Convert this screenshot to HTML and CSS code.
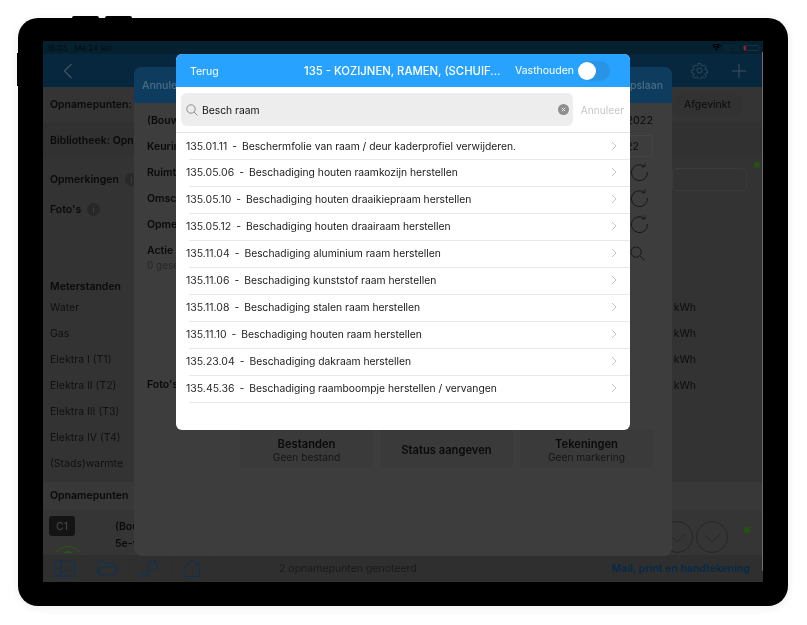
FILE: index.html
```html
<!DOCTYPE html>
<html lang="nl">
<head>
<meta charset="utf-8">
<title>Opnamepunten</title>
<link rel="stylesheet" href="styles.css">
</head>
<body>
<div class="device">
  <span class="hw hw-top1"></span>
  <span class="hw hw-top2"></span>
  <span class="hw hw-left"></span>
  <div class="screen">
    <header class="topbar">
      <div class="status">
        <span>16:03&nbsp;&nbsp; Ma 24 jan.</span>
        <span class="status-right">
          <svg class="wifi" viewBox="0 0 14 10"><path d="M7 9.6 4.9 7.3a3 3 0 0 1 4.2 0zM3.6 6 2.3 4.6a6.8 6.8 0 0 1 9.4 0L10.4 6a5 5 0 0 0-6.8 0zM1.3 3.6 0 2.2a10 10 0 0 1 14 0l-1.3 1.4a8.2 8.2 0 0 0-11.4 0z"/></svg>
          10%
          <span class="battery"><span class="battery-level"></span></span>
        </span>
      </div>
      <div class="nav">
        <svg class="back" viewBox="0 0 10 16"><path d="M8.5 1 1.5 8l7 7"/></svg>
        <span class="nav-actions">
          <svg class="gear" viewBox="0 0 24 24"><circle cx="12" cy="12" r="3.6"/><path d="M10.2 2h3.6l.5 3 2.1.9 2.5-1.8 2.6 2.6-1.8 2.5.9 2.1 3 .5v3.4l-3 .5-.9 2.1 1.8 2.5-2.6 2.6-2.5-1.8-2.1.9-.5 3h-3.6l-.5-3-2.1-.9-2.5 1.8-2.6-2.6 1.8-2.5-.9-2.1-3-.5v-3.4l3-.5.9-2.1-1.8-2.5 2.6-2.6 2.5 1.8 2.1-.9z"/></svg>
          <svg class="plus" viewBox="0 0 14 14"><path d="M7 0v14M0 7h14"/></svg>
        </span>
      </div>
    </header>

    <main class="main">
      <div class="row row-first"><strong>Opnamepunten:</strong><span class="pill">Afgevinkt</span></div>
      <div class="row row-second"><strong>Bibliotheek: Opn</strong></div>
      <div class="row row-opm">
        <strong>Opmerkingen</strong><span class="info">i</span>
        <span class="dot dot-top"></span>
        <span class="field"></span>
      </div>
      <div class="row row-foto"><strong>Foto's</strong><span class="info">i</span></div>
      <div class="meter-title"><strong>Meterstanden</strong></div>
      <div class="row meter"><span>Water</span><span class="unit">kWh</span></div>
      <div class="row meter"><span>Gas</span><span class="unit">kWh</span></div>
      <div class="row meter"><span>Elektra I (T1)</span><span class="unit">kWh</span></div>
      <div class="row meter"><span>Elektra II (T2)</span><span class="unit">kWh</span></div>
      <div class="row meter"><span>Elektra III (T3)</span></div>
      <div class="row meter"><span>Elektra IV (T4)</span></div>
      <div class="row meter"><span>(Stads)warmte</span></div>
      <div class="band"><strong>Opnamepunten</strong></div>
      <div class="item">
        <div class="item-side">
          <span class="badge">C1</span>
          <svg class="signal" viewBox="0 0 26 12"><path class="signal-arc" d="M1 9a16 16 0 0 1 24 0"/><path class="signal-fill" d="M8 10a7 7 0 0 1 10 0z"/></svg>
        </div>
        <div class="item-text"><strong>(Bou</strong><strong>5e-v</strong></div>
        <div class="item-checks">
          <svg class="check" viewBox="0 0 32 32"><circle cx="16" cy="16" r="15.5"/><path d="M9 14l7 7 8-8"/></svg>
          <svg class="check" viewBox="0 0 32 32"><circle cx="16" cy="16" r="15.5"/><path d="M9 14l7 7 8-8"/></svg>
          <span class="dot"></span>
        </div>
      </div>
    </main>

    <footer class="tabbar">
      <span class="tab">
        <svg viewBox="0 0 21 17"><path d="M.5 1h20v15H.5zM7 1v15M.5 8.500H7M10 7.500l3 3 5-5"/></svg>
      </span>
      <span class="tab">
        <svg viewBox="0 0 21 17"><path d="M1 15V2.500a1 1 0 0 1 1-1h5.500l2 2H17a1 1 0 0 1 1 1V7M1 15 4 7h16.500L18 14.300a1 1 0 0 1-1 .7z"/></svg>
      </span>
      <span class="tab">
        <svg viewBox="0 0 21 17"><circle cx="13.500" cy="5.500" r="5"/><circle cx="15.500" cy="3.500" r=".8"/><path d="M9.700 8.800 2.500 15v1.800H5l1-1.800h2v-2l3.500-3"/></svg>
      </span>
      <span class="tab">
        <svg viewBox="0 0 21 17"><path d="M1.500 8.500 10.500.5l9 8M3.500 7V16.500H17.500V7M15 3.500V1.500h2V6M10.500 9v5"/></svg>
      </span>
      <span class="tab-count">2 opnamepunten genoteerd</span>
      <strong class="tab-mail">Mail, print en handtekening</strong>
    </footer>

    <span class="edge"></span>

    <section class="panel">
      <div class="panel-head"><span>Annule</span><span>Opslaan</span></div>
      <div class="panel-row panel-row-first"><strong>(Bouw</strong><span class="date-year">2022</span></div>
      <div class="panel-row"><strong>Keurin</strong><span class="date-box">22</span></div>
      <div class="panel-row"><strong>Ruimt</strong>
        <svg class="refresh" viewBox="0 0 18 18"><path d="M14.500 3.500a8 8 0 1 0 2.900 5.500M15 .5v3.300h-3.300"/></svg>
      </div>
      <div class="panel-row"><strong>Omsc</strong>
        <svg class="refresh" viewBox="0 0 18 18"><path d="M14.500 3.500a8 8 0 1 0 2.900 5.500M15 .5v3.300h-3.300"/></svg>
      </div>
      <div class="panel-row"><strong>Opme</strong>
        <svg class="refresh" viewBox="0 0 18 18"><path d="M14.500 3.500a8 8 0 1 0 2.900 5.500M15 .5v3.300h-3.300"/></svg>
      </div>
      <div class="panel-row panel-row-action">
        <div class="action-text"><strong>Actie</strong><span class="action-sub">0 gese</span></div>
        <svg class="lens" viewBox="0 0 16 16"><circle cx="6.500" cy="6.500" r="5.500"/><path d="M10.500 10.500l5 5"/></svg>
      </div>
      <div class="panel-foto"><strong>Foto's</strong></div>
      <div class="panel-buttons">
        <div class="panel-button"><strong>Bestanden</strong><span>Geen bestand</span></div>
        <div class="panel-button"><strong>Status aangeven</strong></div>
        <div class="panel-button"><strong>Tekeningen</strong><span>Geen markering</span></div>
      </div>
    </section>

    <section class="modal">
      <div class="modal-head">
        <span class="modal-back">Terug</span>
        <span class="modal-title">135 - KOZIJNEN, RAMEN, (SCHUIF...</span>
        <span class="modal-hold">Vasthouden</span>
        <span class="toggle"><span class="knob"></span></span>
      </div>
      <div class="search-row">
        <div class="search-box">
          <svg class="search-icon" viewBox="0 0 12 12"><circle cx="5" cy="5" r="4.200"/><path d="M8 8l3.500 3.500"/></svg>
          <span class="search-text">Besch raam</span>
          <span class="clear"><svg viewBox="0 0 6 6"><path d="M1 1l4 4M5 1 1 5"/></svg></span>
        </div>
        <span class="search-cancel">Annuleer</span>
      </div>
      <ul class="results">
        <li><span class="result"><span class="code">135.01.11</span><span class="dash">-</span>Beschermfolie van raam / deur kaderprofiel verwijderen.</span><svg class="chev" viewBox="0 0 6 10"><path d="M1 1l4 4-4 4"/></svg></li>
        <li><span class="result"><span class="code">135.05.06</span><span class="dash">-</span>Beschadiging houten raamkozijn herstellen</span><svg class="chev" viewBox="0 0 6 10"><path d="M1 1l4 4-4 4"/></svg></li>
        <li><span class="result"><span class="code">135.05.10</span><span class="dash">-</span>Beschadiging houten draaikiepraam herstellen</span><svg class="chev" viewBox="0 0 6 10"><path d="M1 1l4 4-4 4"/></svg></li>
        <li><span class="result"><span class="code">135.05.12</span><span class="dash">-</span>Beschadiging houten draairaam herstellen</span><svg class="chev" viewBox="0 0 6 10"><path d="M1 1l4 4-4 4"/></svg></li>
        <li><span class="result"><span class="code">135.11.04</span><span class="dash">-</span>Beschadiging aluminium raam herstellen</span><svg class="chev" viewBox="0 0 6 10"><path d="M1 1l4 4-4 4"/></svg></li>
        <li><span class="result"><span class="code">135.11.06</span><span class="dash">-</span>Beschadiging kunststof raam herstellen</span><svg class="chev" viewBox="0 0 6 10"><path d="M1 1l4 4-4 4"/></svg></li>
        <li><span class="result"><span class="code">135.11.08</span><span class="dash">-</span>Beschadiging stalen raam herstellen</span><svg class="chev" viewBox="0 0 6 10"><path d="M1 1l4 4-4 4"/></svg></li>
        <li><span class="result"><span class="code">135.11.10</span><span class="dash">-</span>Beschadiging houten raam herstellen</span><svg class="chev" viewBox="0 0 6 10"><path d="M1 1l4 4-4 4"/></svg></li>
        <li><span class="result"><span class="code">135.23.04</span><span class="dash">-</span>Beschadiging dakraam herstellen</span><svg class="chev" viewBox="0 0 6 10"><path d="M1 1l4 4-4 4"/></svg></li>
        <li><span class="result"><span class="code">135.45.36</span><span class="dash">-</span>Beschadiging raamboompje herstellen / vervangen</span><svg class="chev" viewBox="0 0 6 10"><path d="M1 1l4 4-4 4"/></svg></li>
      </ul>
    </section>
  </div>
</div>
</body>
</html>
```

FILE: styles.css
```css
* { box-sizing: border-box; }
html, body { margin: 0; background: #fff; }
body {
  width: 807px;
  height: 625px;
  overflow: hidden;
  font-family: Inter, "Liberation Sans", sans-serif;
  font-size: 10.5px;
  color: #111;
}
strong { font-weight: 600; }
svg { display: block; fill: none; }

.device {
  position: relative;
  width: 770px;
  height: 588px;
  margin: 18px 0 0 18px;
  padding: 23px 25px 24px;
  background: #000;
  border-radius: 20px;
  box-shadow: 0 2px 10px rgba(0, 0, 0, .07);
  filter: blur(.35px);
}
.hw { position: absolute; background: #000; }
.hw-top1 { left: 54px; top: -2px; width: 27px; height: 3px; border-radius: 2px 2px 0 0; }
.hw-top2 { left: 87px; top: -2px; width: 27px; height: 3px; border-radius: 2px 2px 0 0; }
.hw-left { left: -1px; top: 35px; width: 2px; height: 33px; }

.screen {
  position: relative;
  display: flex;
  flex-direction: column;
  width: 720px;
  height: 541px;
  overflow: hidden;
  background: #333;
}

/* top bar */
.topbar { height: 46px; background: #07273e; color: #0c0c0c; }
.status {
  display: flex;
  justify-content: space-between;
  align-items: center;
  height: 13px;
  padding: 0 4px;
  font-size: 8px;
  background: #05202f;
}
.status-right { display: flex; align-items: center; gap: 3px; color: #12303f; }
.wifi { width: 9px; height: 7px; fill: #000; }
.battery {
  display: block;
  width: 16px;
  height: 6px;
  border: 1px solid #163247;
  border-radius: 2px;
}
.battery-level { display: block; width: 2px; height: 100%; background: #a81c1c; }
.nav {
  display: flex;
  justify-content: space-between;
  align-items: center;
  height: 33px;
  padding: 0 17px 0 20px;
}
.back { width: 10px; height: 16px; stroke: #3d5363; stroke-width: 1.300; }
.nav-actions { display: flex; align-items: center; gap: 24px; }
.gear { width: 17px; height: 17px; stroke: #3d5363; stroke-width: 1.100; }
.plus { width: 14px; height: 14px; stroke: #3d5363; stroke-width: 1; }

/* page behind the panel */
.main { position: relative; flex: 1; min-height: 0; }
.row { display: flex; align-items: center; gap: 6px; padding: 0 7px; color: #0a0a0a; }
.row-first { height: 36px; justify-content: space-between; padding-right: 20px; background: #343434; border-bottom: 1px solid #313131; }
.row-second { height: 34px; background: #313131; }
.row-opm { position: relative; height: 28px; margin-top: 8px; }
.row-foto { height: 28px; margin-top: 2px; }
.pill {
  display: flex;
  align-items: center;
  justify-content: center;
  width: 71px;
  height: 24px;
  border-radius: 12px;
  background: #323232;
}
.info {
  display: flex;
  align-items: center;
  justify-content: center;
  width: 13px;
  height: 13px;
  border-radius: 50%;
  background: #282828;
  color: #444;
  font-size: 9px;
}
.dot { display: block; width: 6px; height: 6px; border-radius: 50%; background: #215412; }
.dot-top { position: absolute; right: 3px; top: -3px; }
.field {
  position: absolute;
  left: 629px;
  top: 3px;
  width: 75px;
  height: 23px;
  border: 1px solid #3a3a3a;
  border-radius: 4px;
}
.meter-title { height: 15px; margin-top: 56px; padding: 0 7px; line-height: 15px; color: #0a0a0a; }
.meter { height: 26px; justify-content: space-between; padding-right: 67px; color: #101010; }
.unit { color: #0c0c0c; }
.band { height: 28px; margin-top: 6px; padding: 0 7px; line-height: 28px; background: #383838; color: #0a0a0a; }
.item { display: flex; height: 45px; padding: 6px 13px 0 6px; overflow: hidden; background: #353535; }
.item-side { width: 66px; }
.badge {
  display: flex;
  align-items: center;
  justify-content: center;
  width: 26px;
  height: 20px;
  border-radius: 3px;
  background: #141414;
  color: #4a4a4a;
}
.signal { width: 26px; height: 12px; margin: 7px 0 0 6px; }
.signal-arc { stroke: #275a14; stroke-width: 1; }
.signal-fill { fill: #275a14; }
.item-text { display: flex; flex-direction: column; gap: 4px; color: #0a0a0a; line-height: 13px; padding-top: 4px; }
.item-checks { display: flex; align-items: flex-start; gap: 3px; margin-left: auto; margin-top: 5px; }
.check { width: 32px; height: 32px; stroke: #262626; stroke-width: 1; }
.item-checks .dot { margin: 6px 0 0 13px; }

/* bottom tabs */
.tabbar {
  display: flex;
  align-items: center;
  height: 27px;
  padding-left: 1px;
  background: #2f2f2f;
}
.tab {
  display: flex;
  align-items: center;
  justify-content: center;
  width: 42.5px;
  height: 100%;
  border-right: 1px solid #2d2d2d;
}
.tab svg { width: 21px; height: 17px; stroke: #103050; stroke-width: 1; }
.tab-count { margin-left: 65px; color: #1a1a1a; }
.tab-mail { margin-left: auto; margin-right: 13px; color: #052a48; }
.edge { position: absolute; right: 0; top: 11px; bottom: 11px; width: 1px; background: #6e6e6e; }

/* panel */
.panel {
  position: absolute;
  left: 91px;
  top: 26px;
  width: 538px;
  height: 489px;
  border-radius: 8px;
  overflow: hidden;
  background: #3d3d3d;
  color: #0a0a0a;
}
.panel-head {
  display: flex;
  justify-content: space-between;
  align-items: center;
  height: 36px;
  padding: 0 9px 0 8px;
  background: #0d3c5e;
  color: #4b6d85;
  font-weight: 500;
}
.panel-row { display: flex; justify-content: space-between; align-items: center; height: 26px; padding: 0 19px 0 13px; }
.panel-row-first { margin-top: 5px; height: 25px; }
.date-year { font-size: 10.8px; }
.date-box {
  display: flex;
  align-items: center;
  justify-content: flex-end;
  width: 30px;
  height: 22px;
  padding-right: 13px;
  border: 1px solid #444;
  border-left: 0;
  border-radius: 0 3px 3px 0;
}
.refresh { width: 18px; height: 18px; margin-right: 5px; stroke: #181818; stroke-width: 1; }
.panel-row-action { height: 32px; margin-top: 7px; align-items: flex-start; }
.action-text { display: flex; flex-direction: column; gap: 2px; }
.action-sub { color: #262626; font-size: 10px; }
.lens { width: 15px; height: 15px; margin: 2px 8px 0 0; stroke: #181818; stroke-width: 1; }
.panel-foto { height: 14px; margin-top: 102px; padding-left: 13px; line-height: 14px; }
.panel-buttons {
  display: grid;
  grid-template-columns: repeat(3, 133px);
  gap: 7px;
  margin: 38px 0 0 106px;
}
.panel-button {
  display: flex;
  flex-direction: column;
  align-items: center;
  justify-content: center;
  height: 38px;
  padding-top: 3px;
  background: #3a3a3a;
  line-height: 13px;
  font-size: 11.200px;
}
.panel-button span { color: #151515; font-size: 10.200px; }

/* modal */
.modal {
  position: absolute;
  left: 133px;
  top: 13px;
  width: 454px;
  height: 376px;
  border-radius: 6px;
  overflow: hidden;
  background: #fff;
}
.modal-head {
  display: flex;
  align-items: center;
  height: 33px;
  background: #27a3ff;
  color: #fff;
}
.modal-back { width: 128px; padding: 1px 0 0 14px; }
.modal-title { width: 211px; padding-top: 1px; font-weight: 500; font-size: 11.300px; white-space: nowrap; }
.modal-hold { width: 63px; }
.toggle {
  position: relative;
  display: block;
  width: 32px;
  height: 20px;
  border-radius: 10px;
  background: #2994e6;
}
.knob {
  position: absolute;
  left: 0;
  top: 1px;
  width: 18px;
  height: 18px;
  border-radius: 50%;
  background: #fff;
}
.search-row {
  display: flex;
  align-items: center;
  justify-content: space-between;
  height: 46px;
  padding: 0 6px 0 5px;
  border-bottom: 1px solid #e4e4e4;
}
.search-box {
  display: flex;
  align-items: center;
  width: 392px;
  height: 33px;
  padding: 0 4px 0 5px;
  border-radius: 6px;
  background: #ededed;
}
.search-icon { width: 12px; height: 12px; stroke: #8d8d8d; stroke-width: 1; }
.search-text { margin-left: 4px; color: #111; font-size: 10.300px; }
.clear {
  display: flex;
  align-items: center;
  justify-content: center;
  width: 11px;
  height: 11px;
  margin-left: auto;
  border-radius: 50%;
  background: #8e8e8e;
}
.clear svg { width: 5px; height: 5px; stroke: #ededed; stroke-width: 1.200; }
.search-cancel { color: #c6c6c6; font-size: 10.200px; }
.results { margin: 0; padding: 0; list-style: none; }
.results li {
  display: flex;
  align-items: center;
  justify-content: space-between;
  height: 27px;
  margin-left: 13px;
  padding: 0 13px 2px 0;
  border-bottom: 1px solid #e9e9e9;
  font-size: 10.300px;
  color: #1a1a1a;
  white-space: nowrap;
}
.results li:first-child { padding-bottom: 0; }
.result { margin-left: -3px; }
.code { font-size: 10.500px; color: #2a2a2a; }
.dash { margin: 0 5px; }
.chev { width: 6px; height: 10px; stroke: #c4c4c4; stroke-width: 1; }
```
